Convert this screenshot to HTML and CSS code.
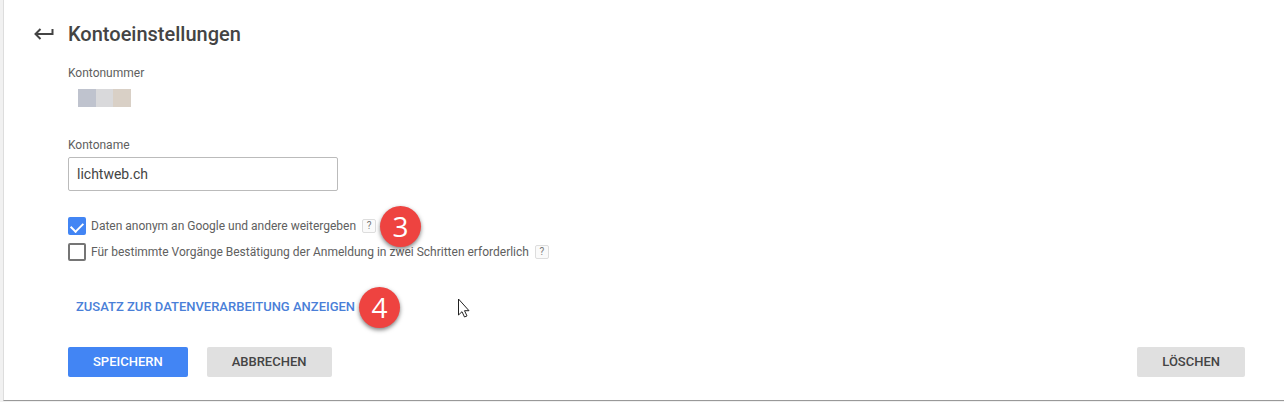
FILE: index.html
```html
<!DOCTYPE html>
<html lang="de">

<head>
    <meta charset="UTF-8" />
    <title>Kontoeinstellungen</title>
    <link rel="stylesheet" href="styles.css">
</head>

<body>
    <main class="panel">
        <header class="header">
            <button type="button" class="back" aria-label="Zurück">
                <svg width="20" height="14" viewBox="0 0 20 14" fill="none" stroke="#444" stroke-width="2">
                    <path d="M18.500 2v5H2M6.500 2L1.500 7l5 5" />
                </svg>
            </button>
            <h1>Kontoeinstellungen</h1>
        </header>

        <form class="content">
            <div class="label">Kontonummer</div>
            <div class="account-number">
                <span class="block block-blue"></span>
                <span class="block block-grey"></span>
                <span class="block block-sand"></span>
            </div>

            <label class="label" for="name">Kontoname</label>
            <input type="text" class="text-input" id="name" value="lichtweb.ch" />

            <div class="option">
                <input type="checkbox" class="checkbox" id="share" checked />
                <label for="share">Daten anonym an Google und andere weitergeben</label>
                <span class="help-wrap">
                    <button type="button" class="help">?</button>
                    <span class="badge">3</span>
                </span>
            </div>
            <div class="option">
                <input type="checkbox" class="checkbox" id="confirm" />
                <label for="confirm">Für bestimmte Vorgänge Bestätigung der Anmeldung in zwei Schritten erforderlich</label>
                <button type="button" class="help">?</button>
            </div>

            <div class="addendum">
                <a href="#">ZUSATZ ZUR DATENVERARBEITUNG ANZEIGEN</a>
                <span class="badge">4</span>
            </div>

            <div class="actions">
                <button type="submit" class="button primary">SPEICHERN</button>
                <button type="button" class="button">ABBRECHEN</button>
                <button type="button" class="button delete">LÖSCHEN</button>
            </div>
        </form>
    </main>

    <svg class="cursor" width="14" height="20" viewBox="0 0 14 20" fill="#fff" stroke="#222" stroke-width="1">
        <path d="M1.500 1v16l3.500-3.300 2.500 5.300 2.500-1.100-2.500-5.200h4.500z" />
    </svg>
</body>

</html>
```

FILE: styles.css
```css
* {
    box-sizing: border-box;
}
body {
    margin: 0;
    padding: 0 0 0 3px;
    background: #f1f1f1;
    font-family: Roboto, "Liberation Sans", sans-serif;
    font-size: 12px;
    line-height: 16px;
    color: #606060;
}
button,
input {
    font-family: inherit;
    margin: 0;
}

.panel {
    padding: 20px 39px 23px 24px;
    background: #fff;
    border-left: 1px solid #ddd;
    border-bottom: 1px solid #999;
}

.header {
    display: flex;
    align-items: center;
    gap: 8px;
    height: 28px;
}
.back {
    display: flex;
    align-items: center;
    justify-content: center;
    width: 32px;
    height: 28px;
    padding: 0;
    background: none;
    border: 0;
}
h1 {
    margin: 0;
    font-size: 20px;
    line-height: 28px;
    font-weight: 500;
    color: #444;
}

.content {
    margin: 17px 0 0 40px;
}
.label {
    display: block;
}
.account-number {
    display: flex;
    margin: 8px 0 30px;
    padding-left: 10px;
}
.block {
    width: 18px;
    height: 18px;
}
.block-blue {
    background: #bfc3ce;
}
.block-grey {
    width: 17px;
    background: #d9d9db;
}
.block-sand {
    background: #d9d0c6;
}
.text-input {
    display: block;
    width: 270px;
    height: 34px;
    margin: 4px 0 26px;
    padding: 0 8px;
    border: 1px solid #bbb;
    border-radius: 2px;
    font-size: 14px;
    color: #444;
}

.option {
    display: flex;
    align-items: center;
    height: 18px;
    margin-bottom: 8px;
    line-height: 18px;
}
.checkbox {
    appearance: none;
    flex: none;
    width: 18px;
    height: 18px;
    margin-right: 5px;
    border: 2px solid #757575;
    border-radius: 2px;
    background: #fff;
}
.checkbox:checked {
    border-color: #4285f4;
    background: #4285f4;
}
.checkbox:checked::before {
    content: "";
    display: block;
    width: 10px;
    height: 6px;
    margin: 3px auto 0;
    border: solid #fff;
    border-width: 0 0 2px 2px;
    transform: rotate(-45deg);
}
.help-wrap {
    position: relative;
    display: flex;
}
.help {
    width: 14px;
    height: 14px;
    margin-left: 6px;
    padding: 0;
    border: 1px solid #ddd;
    border-radius: 2px;
    background: #fafafa;
    font-size: 10px;
    line-height: 12px;
    color: #777;
}

/* Numbered step markers, on top of the form */
.badge {
    position: absolute;
    left: 100%;
    top: 50%;
    z-index: 1;
    width: 41px;
    height: 41px;
    margin: -20px 0 0 4px;
    border-radius: 50%;
    background: #ee4340;
    box-shadow: 0 2px 4px rgba(0, 0, 0, 0.5);
    font-family: "Open Sans", sans-serif;
    font-size: 28px;
    font-weight: 500;
    line-height: 40px;
    text-align: center;
    color: #fff;
}

.addendum {
    position: relative;
    width: max-content;
    margin: 38px 0 32px;
    padding-left: 8px;
    font-size: 13px;
    font-weight: 500;
}
.addendum a {
    color: #4a7fd8;
    text-decoration: none;
}

.actions {
    display: flex;
    gap: 19px;
}
.button {
    height: 30px;
    padding: 0 25px 1px;
    border: 0;
    border-radius: 2px;
    background: #e0e0e0;
    font-size: 13px;
    font-weight: 500;
    color: #444;
}
.primary {
    background: #4285f4;
    color: #fff;
}
.delete {
    margin-left: auto;
}

.cursor {
    position: absolute;
    left: 457px;
    top: 298px;
}
```
